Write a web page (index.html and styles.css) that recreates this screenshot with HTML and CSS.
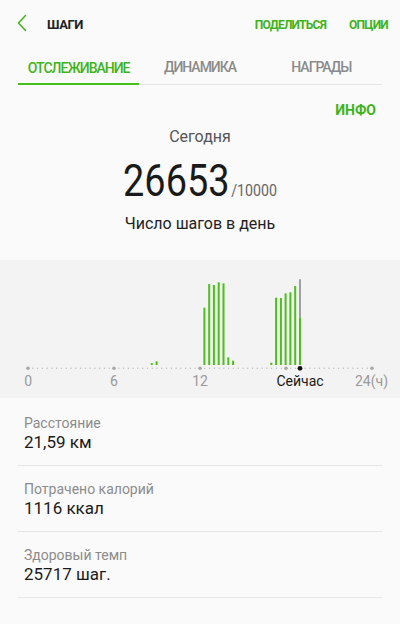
FILE: index.html
```html
<!DOCTYPE html>
<html lang="ru">
<head>
<meta charset="utf-8">
<title>Шаги</title>
<link rel="stylesheet" href="styles.css">
</head>
<body>
<div class="app">
  <header class="header">
    <svg class="back" width="16" height="18" viewBox="0 0 16 18">
      <path d="M10.5 1.5 L3.5 9 L10.5 16.5" fill="none" stroke="#3fb31a" stroke-width="1.5" stroke-linecap="round" stroke-linejoin="round"/>
    </svg>
    <span class="title">ШАГИ</span>
    <nav class="actions">
      <span class="action">ПОДЕЛИТЬСЯ</span>
      <span class="action">ОПЦИИ</span>
    </nav>
  </header>

  <div class="tabs">
    <div class="tab active">ОТСЛЕЖИВАНИЕ</div>
    <div class="tab">ДИНАМИКА</div>
    <div class="tab">НАГРАДЫ</div>
  </div>

  <div class="info">ИНФО</div>
  <div class="today">Сегодня</div>
  <div class="count"><span class="steps">26653</span><span class="goal">/10000</span></div>
  <div class="caption">Число шагов в день</div>

  <section class="chart">
    <svg class="chart-svg" width="400" height="138" viewBox="0 0 400 138">
      <g fill="#4cbf1c">
        <rect x="150.8" y="103" width="2" height="2"/>
        <rect x="155.6" y="101.3" width="2" height="3.7"/>
        <rect x="203.4" y="47.7" width="2" height="57.3"/>
        <rect x="208.2" y="24" width="2" height="81"/>
        <rect x="212.9" y="25" width="2" height="80"/>
        <rect x="217.7" y="22.3" width="2" height="82.7"/>
        <rect x="222.5" y="23.3" width="2" height="81.7"/>
        <rect x="227.3" y="97.3" width="2" height="7.7"/>
        <rect x="232.1" y="100.7" width="2" height="4.3"/>
        <rect x="270.3" y="102.7" width="2" height="2.3"/>
        <rect x="275.1" y="37.7" width="2" height="67.3"/>
        <rect x="279.9" y="38" width="2" height="67"/>
        <rect x="284.6" y="33.3" width="2" height="71.7"/>
        <rect x="289.4" y="32.3" width="2" height="72.7"/>
        <rect x="294.2" y="26" width="2" height="79"/>
        <rect x="299" y="57.3" width="2" height="47.7"/>
      </g>
      <rect x="299" y="19.3" width="2" height="38" fill="#a0a0a0"/>
      <line x1="28" y1="108.3" x2="372" y2="108.3" stroke="#bdbdbd" stroke-width="1.4" stroke-linecap="round" stroke-dasharray="0 4.7778"/>
      <g fill="#a8a8a8">
        <circle cx="28" cy="108.3" r="1.8"/>
        <circle cx="114" cy="108.3" r="1.8"/>
        <circle cx="200" cy="108.3" r="1.8"/>
        <circle cx="286" cy="108.3" r="1.8"/>
        <circle cx="372" cy="108.3" r="1.8"/>
      </g>
      <circle cx="300" cy="108.3" r="2.4" fill="#111"/>
      <g class="axis" text-anchor="middle">
        <text x="28.3" y="126.3">0</text>
        <text x="114" y="126.3">6</text>
        <text x="200" y="126.3">12</text>
        <text x="300" y="126.3" class="now">Сейчас</text>
        <text x="371.5" y="126.3">24(ч)</text>
      </g>
    </svg>
  </section>

  <ul class="stats">
    <li class="stat">
      <div class="label">Расстояние</div>
      <div class="value">21,59 км</div>
    </li>
    <li class="stat">
      <div class="label">Потрачено калорий</div>
      <div class="value">1116 ккал</div>
    </li>
    <li class="stat">
      <div class="label">Здоровый темп</div>
      <div class="value">25717 шаг.</div>
    </li>
  </ul>
</div>
</body>
</html>
```

FILE: styles.css
```css
* { box-sizing: border-box; }

html, body {
  margin: 0;
  padding: 0;
  background: #fafafa;
}

body {
  font-family: Roboto, "Noto Sans", "Liberation Sans", sans-serif;
  color: #222;
}

.app {
  width: 400px;
  min-height: 624px;
  background: #fafafa;
}

.header {
  height: 46px;
  display: flex;
  align-items: center;
  padding: 3px 12px 0 15px;
}

.back {
  display: block;
  flex: none;
  margin-top: -3px;
}

.title {
  margin-left: 16px;
  font-size: 13px;
  font-weight: 700;
  color: #222;
  letter-spacing: -0.4px;
}

.actions {
  margin-left: auto;
  display: flex;
  gap: 23px;
}

.action {
  font-size: 12px;
  font-weight: 700;
  color: #3fb31a;
  letter-spacing: -0.75px;
}

.tabs {
  margin: 0 18px;
  height: 39px;
  display: grid;
  grid-template-columns: 1fr 1fr 1fr;
  border-bottom: 1px solid #e4e4e4;
}

.tab {
  display: flex;
  align-items: center;
  justify-content: center;
  padding-top: 4px;
  font-size: 14px;
  font-weight: 500;
  color: #8a8a8a;
  letter-spacing: -1px;
}

.tab.active {
  color: #3fb31a;
  border-bottom: 2px solid #44c01c;
  margin-bottom: -1px;
  padding-top: 6px;
}

.info {
  margin-top: 15px;
  padding-right: 24px;
  text-align: right;
  font-size: 14px;
  line-height: 20px;
  font-weight: 700;
  color: #3fb31a;
}

.today {
  margin-top: 7px;
  text-align: center;
  font-size: 16px;
  line-height: 20px;
  color: #555;
}

.count {
  margin-top: 8px;
  text-align: center;
  line-height: 52px;
  height: 52px;
  transform: scaleX(0.86);
  transform-origin: 200px 0;
  white-space: nowrap;
}

.steps {
  font-size: 44px;
  color: #1a1a1a;
}

.goal {
  font-size: 16.5px;
  color: #666;
  margin-left: 2px;
}

.caption {
  margin-top: 7px;
  text-align: center;
  font-size: 16px;
  line-height: 20px;
  color: #222;
}

.chart {
  margin-top: 26px;
  height: 138px;
  background: #f3f3f3;
}

.chart-svg {
  display: block;
}

.axis {
  font-family: Roboto, "Noto Sans", "Liberation Sans", sans-serif;
  font-size: 14px;
  fill: #9a9a9a;
}

.axis .now {
  fill: #1a1a1a;
}

.stats {
  list-style: none;
  margin: 0;
  padding: 2px 18px 0;
}

.stat {
  padding: 14px 6px 13px;
  border-bottom: 1px solid #e6e6e6;
}

.label {
  font-size: 14px;
  line-height: 18px;
  color: #8c8c8c;
}

.value {
  font-size: 17px;
  line-height: 20px;
  color: #1a1a1a;
}
```
